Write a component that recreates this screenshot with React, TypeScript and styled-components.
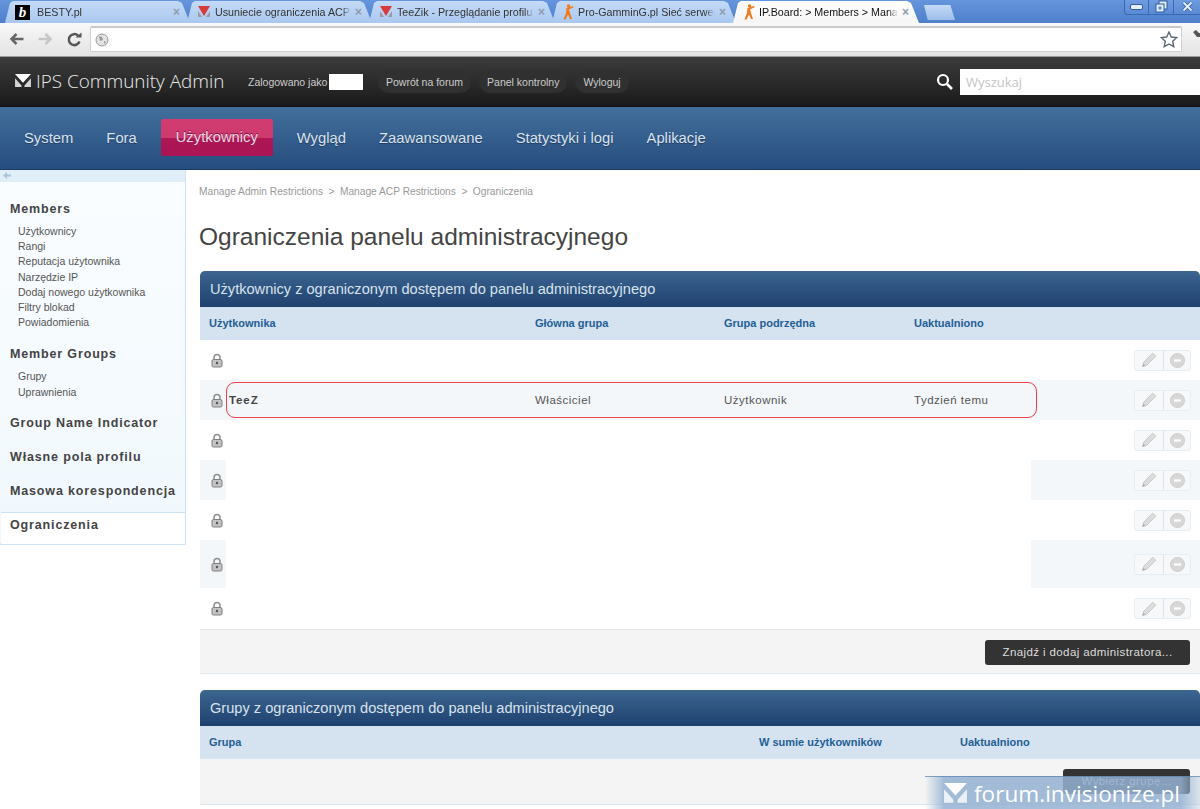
import React from "react";
import styled, { createGlobalStyle } from "styled-components";

const Global = createGlobalStyle`
  html, body { margin: 0; padding: 0; height: 809px; overflow: hidden; background: #fff; }
  body { font-family: "Liberation Sans", Arial, sans-serif; color: #444; }
  * { box-sizing: border-box; }
`;

const Page = styled.div`position: relative; width: 1200px; height: 809px; overflow: hidden;`;

const TabStrip = styled.div`
  height: 23px; display: flex; align-items: flex-end; padding-left: 5px;
  background: linear-gradient(#6595dc, #4f7fca);
`;
const Tab = styled.div<{ $active?: boolean; $w: number }>`
  width: ${p => p.$w}px; height: 22px; margin-right: -4px; padding: 0 10px 0 10px;
  display: flex; align-items: center; gap: 4px;
  clip-path: polygon(0 100%, 5px 2px, 8px 0, calc(100% - 13px) 0, calc(100% - 9px) 2px, calc(100% - 1px) 100%);
  background: ${p => p.$active ? "linear-gradient(#fff, #f5f5f5)" : "linear-gradient(#c4daf6, #a9c8f0)"};
  position: relative; z-index: ${p => p.$active ? 2 : 1};
  font: 10.7px "Liberation Sans", sans-serif; color: ${p => p.$active ? "#111" : "#333"}; white-space: nowrap;
`;
const TabTitle = styled.span`
  flex: 1; overflow: hidden; min-width: 0;
  -webkit-mask-image: linear-gradient(90deg, #000 93%, transparent);
  mask-image: linear-gradient(90deg, #000 93%, transparent);
`;
const TabClose = styled.span`color: #8f9cac; font-size: 12px; font-weight: 700; flex: none; margin-right: 1px;`;
const NewTab = styled.div`
  width: 31px; height: 15px; margin: 0 0 3px 8px;
  background: linear-gradient(#c4daf6, #9dbfec);
  clip-path: polygon(0 0, 85% 0, 100% 100%, 12% 100%);
`;
const WindowButtons = styled.div`
  margin-left: auto; align-self: flex-start; width: 76px; height: 15px; display: grid;
  grid-template-columns: 23px 25px 1fr;
  border: 1px solid #3768b2; border-top: 0; border-right: 0; border-radius: 0 0 0 4px;
  background: linear-gradient(#6f9ce0, #5a8ad4);
`;
const WinBtn = styled.div`
  display: flex; align-items: center; justify-content: center; padding-bottom: 1px;
  & + & { border-left: 1px solid #3768b2; }
`;
const Toolbar = styled.div`
  height: 34px; display: flex; align-items: center; padding: 0 0 1px 9px;
  background: linear-gradient(#f8f8f8, #e3e3e3); border-bottom: 1px solid #9a9a9a;
`;
const NavIcons = styled.div`display: flex; gap: 14px; align-items: center; width: 81px;`;
const Omnibox = styled.div`
  width: 1092px; height: 26px; background: #fff; border: 1px solid #d0d0d0; border-top: 2px solid #c8c8c8; border-radius: 2px;
  display: flex; align-items: center; justify-content: space-between; padding: 0 3px 0 4px;
`;
const Wrench = styled.div`margin-left: 11px; width: 7px; overflow: hidden; flex: none;`;

const TopBar = styled.header`
  height: 50px; background: linear-gradient(#3c3c3c, #1a1a1a); display: flex; align-items: center;
  padding-left: 15px; color: #fff; border-bottom: 1px solid #111;
`;
const Brand = styled.div`
  display: flex; align-items: center; gap: 5px; width: 233px; flex: none; margin-top: -2px;
  font: 300 18.9px "Open Sans", sans-serif; color: #ececec; white-space: nowrap;
`;
const Logged = styled.div`display: flex; align-items: center; gap: 2px; font-size: 10.5px; color: #ccc; width: 130px; flex: none;`;
const Redacted = styled.span`width: 34px; height: 16px; background: #fff;`;
const Pills = styled.div`display: flex; gap: 8px;`;
const Pill = styled.div`
  height: 22px; padding: 0 8px; border-radius: 11px; background: #303030;
  font-size: 10.5px; color: #ccc; line-height: 22px;
`;
const Search = styled.div`margin-left: auto; display: flex; align-items: center; gap: 7px;`;
const SearchBox = styled.div`
  width: 240px; height: 26px; background: #fff; padding-left: 6px;
  font: 13px/26px "Open Sans", sans-serif; color: #c4c4c4;
`;

const MainNav = styled.nav`
  height: 63px; background: linear-gradient(#426f9c, #264d7f); border-bottom: 1px solid #1d3a5f;
  display: flex; align-items: center; padding: 0 0 1px 24px; gap: 33px;
`;
const NavItem = styled.div<{ $active?: boolean }>`
  font: 14.8px "Liberation Sans", sans-serif; color: #dbe3ec; white-space: nowrap;
  text-shadow: 0 1px 1px #1d3a5f;
  ${p => p.$active ? `
    margin: 0 -9px; width: 112px; height: 37px; line-height: 36px; text-align: center;
    border-radius: 2px; color: #ecd9e3; text-shadow: 0 -1px 0 #7d1044;
    background: linear-gradient(#d23c71 0, #cd3a6e 50%, #ae1755 50%, #a91453 100%);
  ` : ""}
`;

const Body = styled.div`display: flex; height: 640px;`;
const Side = styled.aside`width: 186px; flex: none;`;
const SideTop = styled.div`
  height: 12px; background: #e0eef8; padding: 2px 0 0 3px; display: flex;
  border-right: 1px solid #cfe3f1;
`;
const SideMenu = styled.div`
  background: linear-gradient(#fafdff, #f0f8fd); border-right: 1px solid #cfe3f1; height: 363px;
  border-bottom: 2px solid #cfe7f4; padding-top: 19px;
`;
const SideHead = styled.div<{ $active?: boolean }>`
  font: bold 12.5px/16px "Liberation Sans", sans-serif; letter-spacing: .85px; color: #444;
  padding-left: 10px; margin-bottom: 18px;
  ${p => p.$active ? `
    background: #fff; border-top: 1px solid #cbe4f2; margin-left: 1px; padding: 4px 0 12px 9px; height: 32px; margin-top: -5px; margin-bottom: 0;
  ` : ""}
`;
const SideList = styled.ul`
  list-style: none; margin: -11px 0 16px; padding: 0 0 0 18px;
  & + div + & { margin-bottom: 15px; }
`;
const SideLink = styled.li`font-size: 10.5px; line-height: 15.2px; color: #555;`;

const Content = styled.main`flex: 1; padding-left: 14px; min-width: 0;`;
const Crumbs = styled.div`
  padding-top: 15px; height: 52px; font-size: 10.2px; line-height: 14px; color: #999; display: flex; gap: 5.5px; margin-left: -1px;
`;
const Title = styled.h1`
  margin: 0 0 17px -1px; font: 400 24.5px/30px "Liberation Sans", sans-serif; color: #444; height: 32px;
`;
const Panel = styled.section`margin-bottom: 16px; border-bottom: 1px solid #dfe7ef;`;
const PanelHead = styled.div`
  height: 36px; background: linear-gradient(#3c6590, #1f416f); border-radius: 5px 5px 0 0;
  font: 14.6px/37px "Liberation Sans", sans-serif; color: #d9e2ec; padding-left: 10px;
`;
const Row = styled.div<{ $cols: string; $h: number; $bg?: string }>`
  display: grid; grid-template-columns: ${p => p.$cols}; height: ${p => p.$h}px; align-items: center;
  background: ${p => p.$bg ?? "#fff"};
`;
const Th = styled.div`font: bold 11px "Liberation Sans", sans-serif; color: #1f5f96; padding: 0 0 1px 9px;`;
const Cell = styled.div<{ $bold?: boolean }>`
  font: ${p => p.$bold ? "bold 11.5px" : "11.5px"} "Liberation Sans", sans-serif; color: #555; letter-spacing: .5px;
  ${p => p.$bold ? "color:#444; letter-spacing:.9px; padding-left:3px;" : "padding-left:9px;"}
`;
const LockCell = styled.div`padding-left: 11px; display: flex; align-items: center; height: 100%;`;
const RedactedBar = styled.div`grid-column: 2 / 6; width: 805px; background: #fff; align-self: stretch;`;
const HiLite = styled.div`
  position: absolute; left: 226px; top: 382px; width: 811px; height: 36px; border: 1px solid #f0414a; border-radius: 9px;
  pointer-events: none;
`;
const RowActions = styled.div`
  grid-column: 6; justify-self: end; margin-right: 9px; width: 57px; height: 21px; display: grid;
  grid-template-columns: 28px 1fr;
  border: 1px solid #e5edf5; border-radius: 3px; background: #f7f8f9;
`;
const RowAct = styled.div`
  display: flex; align-items: center; justify-content: center;
  & + & { border-left: 1px solid #d9e5f0; }
`;
const Foot = styled.div`
  height: 44px; background: #f4f4f4; border-top: 1px solid #e2e2e2; display: flex; align-items: center; justify-content: flex-end; padding: 1px 10px 0 0;
`;
const DarkBtn = styled.div`
  height: 25px; padding: 0 12px; border-radius: 3px; background: #333; min-width: 205px; text-align: center;
  font-size: 11.5px; line-height: 24px; letter-spacing: .4px; color: #ddd;
`;
const EmptyRow = styled.div`height: 45px; background: #f4f4f4; display: flex; justify-content: flex-end; align-items: center; padding-right: 10px;`;
const DarkBtnSm = styled(DarkBtn)`min-width: 127px;`;
const Watermark = styled.div`
  position: absolute; left: 925px; top: 776px; width: 275px; height: 33px;
  background: linear-gradient(90deg, rgba(163,188,216,0), rgba(148,177,210,.85) 7%, rgba(148,177,210,.85) 93%, rgba(163,188,216,.3));
  border-top: 1px solid rgba(90,130,175,.7);
  display: flex; align-items: center; gap: 7px; padding-left: 19px;
  font: 22.6px "Open Sans", sans-serif; color: #fff; white-space: nowrap;
`;

const Lock = () => (
  <svg width="12" height="15" viewBox="0 0 12 15">
    <path d="M3 7V4.500a3 3 0 0 1 6 0V7" fill="none" stroke="#8d8d8d" strokeWidth="1.500" />
    <rect x="1" y="6.500" width="10" height="7.500" rx="1.500" fill="#c2c2c2" stroke="#808080" strokeWidth="1" />
    <circle cx="6" cy="10" r="1.200" fill="#555" />
  </svg>
);
const Pencil = () => (
  <svg width="16" height="16" viewBox="0 0 16 16">
    <path d="M11.800 1.200l3 3-9 9-4.300 1.400 1.300-4.400z" fill="#ddd" stroke="#c9c9c9" />
    <path d="M1.500 14.600l.8-2.800 2 2z" fill="#aaa" />
  </svg>
);
const Minus = () => (
  <svg width="15" height="15" viewBox="0 0 15 15">
    <circle cx="7.500" cy="7.500" r="7" fill="#d8d8d8" stroke="#ccc" />
    <rect x="4" y="6.400" width="7" height="2.200" fill="#fff" />
  </svg>
);
const VLogo = ({ size, color }: { size: number; color: string }) => (
  <svg width={size} height={size * 0.86} viewBox="0 0 22 19">
    <path d="M0 0h22L11 12z" fill={color} />
    <path d="M0 6l9 10v3H0zM22 6l-9 10v3h9z" fill={color} opacity=".8" />
  </svg>
);
const RedFav = () => (
  <svg width="14" height="14" viewBox="0 0 14 14" style={{ flex: "none" }}>
    <path d="M1 1h12L7 11z" fill="#d93a3a" />
    <path d="M1 6l4 6H1zM13 6l-4 6h4z" fill="#9a9a9a" />
  </svg>
);
const CsFav = () => (
  <svg width="12" height="16" viewBox="0 0 12 16" style={{ flex: "none" }}>
    <circle cx="6.500" cy="2" r="1.700" fill="#f07a1c" />
    <path d="M4.500 4L11 2l.6 1.200-4.600 2.300L8 9l2 6H8L6 10.500 3.500 15.500H1.500L4 9z" fill="#f07a1c" />
  </svg>
);
const BFav = styled.span`
  width: 15px; height: 15px; background: #000; color: #fff; flex: none;
  font: italic bold 15px/15px "Liberation Serif", serif; text-align: center; margin-right: 3px;
`;

const cols = "26px 300px 189px 190px 190px 1fr";
const lockRows: { h: number; alt?: boolean; redacted?: boolean }[] = [
  { h: 40 }, { h: 40, alt: true }, { h: 40 }, { h: 40, alt: true, redacted: true }, { h: 40 }, { h: 48, alt: true, redacted: true }, { h: 41 },
];

export default function App() {
  return (
    <Page>
      <Global />
      <TabStrip>
        <Tab $w={186}><BFav>b</BFav><TabTitle>BESTY.pl</TabTitle><TabClose>×</TabClose></Tab>
        <Tab $w={186}><RedFav /><TabTitle>Usuniecie ograniczenia ACP -</TabTitle><TabClose>×</TabClose></Tab>
        <Tab $w={187}><RedFav /><TabTitle>TeeZik - Przeglądanie profilu -</TabTitle><TabClose>×</TabClose></Tab>
        <Tab $w={185}><CsFav /><TabTitle>Pro-GamminG.pl Sieć serwerów</TabTitle><TabClose>×</TabClose></Tab>
        <Tab $w={187} $active><CsFav /><TabTitle>IP.Board: &gt; Members &gt; Manage</TabTitle><TabClose>×</TabClose></Tab>
        <NewTab />
        <WindowButtons>
          <WinBtn>
            <svg width="13" height="6" viewBox="0 0 13 6"><rect x=".5" y=".5" width="12" height="5" rx="1.500" fill="#e6eefa" stroke="#2f5c9f" /></svg>
          </WinBtn>
          <WinBtn>
            <svg width="13" height="13" viewBox="0 0 13 13"><rect x="4" y="1" width="8" height="8" fill="#e6eefa" stroke="#2f5c9f" /><rect x="1" y="4" width="8" height="8" fill="#e6eefa" stroke="#2f5c9f" /><rect x="3.500" y="6.500" width="3" height="3" fill="#5a8ad4" /></svg>
          </WinBtn>
          <WinBtn>
            <svg width="11" height="11" viewBox="0 0 11 11"><path d="M1.500 1.500l8 8M9.500 1.500l-8 8" stroke="#2f5c9f" strokeWidth="3.500" /><path d="M1.500 1.500l8 8M9.500 1.500l-8 8" stroke="#e6eefa" strokeWidth="2" /></svg>
          </WinBtn>
        </WindowButtons>
      </TabStrip>
      <Toolbar>
        <NavIcons>
          <svg width="15" height="14" viewBox="0 0 15 14"><path d="M14.500 7H3M7.500 2L2.500 7l5 5" fill="none" stroke="#666" strokeWidth="2.500" /></svg>
          <svg width="15" height="14" viewBox="0 0 15 14"><path d="M.5 7H12M7.500 2l5 5-5 5" fill="none" stroke="#c6c6c6" strokeWidth="2.500" /></svg>
          <svg width="15" height="15" viewBox="0 0 15 15"><path d="M12.500 9.500A5.500 5.500 0 1 1 11 3.500" fill="none" stroke="#555" strokeWidth="2.500" /><path d="M8.500 5.500h6v-5z" fill="#555" /></svg>
        </NavIcons>
        <Omnibox>
          <svg width="14" height="14" viewBox="0 0 14 14"><circle cx="7" cy="7" r="6" fill="#e2e2e2" stroke="#999" /><path d="M4 3l3 1 1 3-3 1zM9 8l2 1-2 2z" fill="#9a9a9a" /></svg>
          <svg width="18" height="17" viewBox="0 0 18 17"><path d="M9 1l2.300 5 5.400.6-4 3.700 1.100 5.400L9 13l-4.800 2.700 1.100-5.400-4-3.700L6.700 6z" fill="#fff" stroke="#5a6a78" strokeWidth="1.400" /></svg>
        </Omnibox>
        <Wrench>
          <svg width="22" height="16" viewBox="0 0 22 16"><path d="M0 3l3-2 3 3 4 0 3 4-2 2-3-2-4 0z" fill="#555" /></svg>
        </Wrench>
      </Toolbar>
      <TopBar>
        <Brand><VLogo size={16} color="#fff" />IPS Community Admin</Brand>
        <Logged>Zalogowano jako <Redacted /></Logged>
        <Pills>
          <Pill>Powrót na forum</Pill>
          <Pill>Panel kontrolny</Pill>
          <Pill>Wyloguj</Pill>
        </Pills>
        <Search>
          <svg width="17" height="17" viewBox="0 0 17 17"><circle cx="7" cy="7" r="5" fill="none" stroke="#fff" strokeWidth="2.200" /><path d="M11 11l5 5" stroke="#fff" strokeWidth="2.600" /></svg>
          <SearchBox>Wyszukaj</SearchBox>
        </Search>
      </TopBar>
      <MainNav>
        <NavItem>System</NavItem>
        <NavItem>Fora</NavItem>
        <NavItem $active>Użytkownicy</NavItem>
        <NavItem>Wygląd</NavItem>
        <NavItem>Zaawansowane</NavItem>
        <NavItem>Statystyki i logi</NavItem>
        <NavItem>Aplikacje</NavItem>
      </MainNav>
      <Body>
        <Side>
          <SideTop>
            <svg width="8" height="7" viewBox="0 0 8 7"><path d="M8 2.500H4V0L0 3.500 4 7V4.500h4z" fill="#a9c4d8" /></svg>
          </SideTop>
          <SideMenu>
            <SideHead>Members</SideHead>
            <SideList>
              {["Użytkownicy", "Rangi", "Reputacja użytownika", "Narzędzie IP", "Dodaj nowego użytkownika", "Filtry blokad", "Powiadomienia"].map(t => <SideLink key={t}>{t}</SideLink>)}
            </SideList>
            <SideHead>Member Groups</SideHead>
            <SideList>
              {["Grupy", "Uprawnienia"].map(t => <SideLink key={t}>{t}</SideLink>)}
            </SideList>
            <SideHead>Group Name Indicator</SideHead>
            <SideHead>Własne pola profilu</SideHead>
            <SideHead>Masowa korespondencja</SideHead>
            <SideHead $active>Ograniczenia</SideHead>
          </SideMenu>
        </Side>
        <Content>
          <Crumbs>
            <span>Manage Admin Restrictions</span><span>&gt;</span>
            <span>Manage ACP Restrictions</span><span>&gt;</span>
            <span>Ograniczenia</span>
          </Crumbs>
          <Title>Ograniczenia panelu administracyjnego</Title>
          <Panel>
            <PanelHead>Użytkownicy z ograniczonym dostępem do panelu administracyjnego</PanelHead>
            <Row $cols="326px 189px 190px 190px 1fr" $h={33} $bg="#d5e2f0">
              <Th>Użytkownika</Th><Th>Główna grupa</Th><Th>Grupa podrzędna</Th><Th>Uaktualniono</Th>
            </Row>
            {lockRows.map((r, i) => (
              <Row key={i} $cols={cols} $h={r.h} $bg={r.alt ? "#f4f7fa" : "#fff"}>
                <LockCell><Lock /></LockCell>
                {r.redacted ? <RedactedBar /> : i === 1 ? (
                  <>
                    <Cell $bold>TeeZ</Cell>
                    <Cell>Właściciel</Cell>
                    <Cell>Użytkownik</Cell>
                    <Cell>Tydzień temu</Cell>
                  </>
                ) : null}
                <RowActions>
                  <RowAct><Pencil /></RowAct>
                  <RowAct><Minus /></RowAct>
                </RowActions>
              </Row>
            ))}
            <Foot><DarkBtn>Znajdź i dodaj administratora...</DarkBtn></Foot>
          </Panel>
          <Panel>
            <PanelHead>Grupy z ograniczonym dostępem do panelu administracyjnego</PanelHead>
            <Row $cols="550px 201px 1fr" $h={33} $bg="#d5e2f0">
              <Th>Grupa</Th><Th>W sumie użytkowników</Th><Th>Uaktualniono</Th>
            </Row>
            <EmptyRow><DarkBtnSm>Wybierz grupę...</DarkBtnSm></EmptyRow>
          </Panel>
        </Content>
      </Body>
      <HiLite />
      <Watermark><VLogo size={23} color="#fff" />forum.invisionize.pl</Watermark>
    </Page>
  );
}
